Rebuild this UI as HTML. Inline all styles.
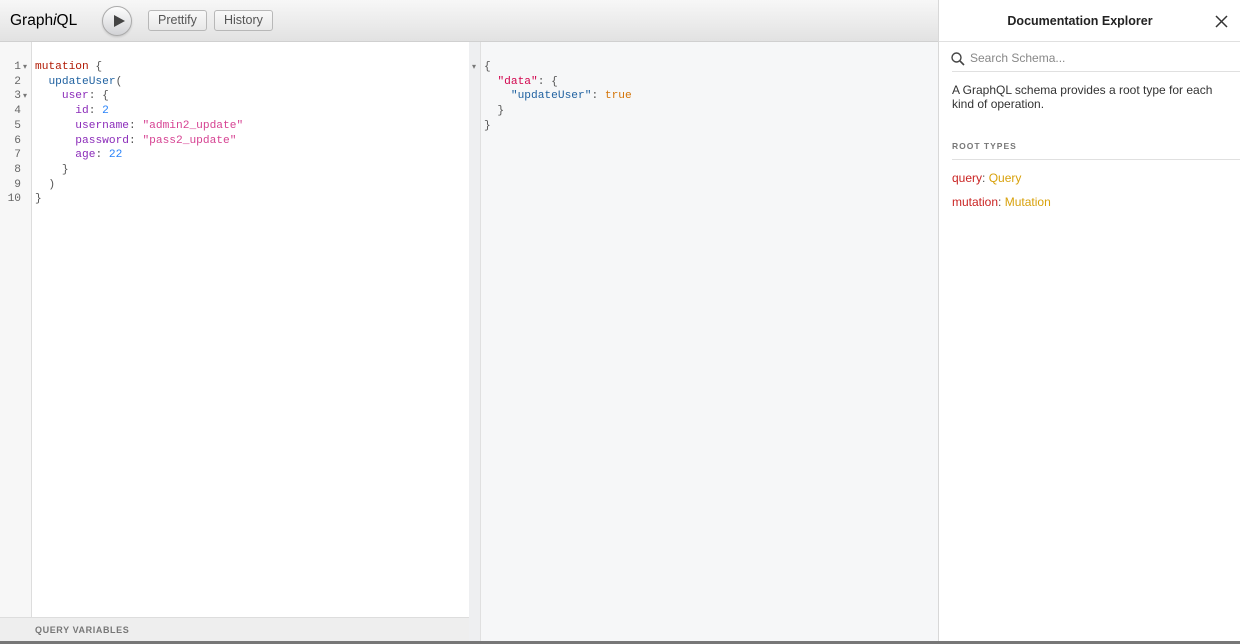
<!DOCTYPE html>
<html><head><style>
*{margin:0;padding:0;box-sizing:border-box}
body{width:1240px;height:644px;overflow:hidden;background:#fff;font-family:"Liberation Sans",sans-serif;position:relative}
.top{position:absolute;left:0;top:0;width:938px;height:42px;background:linear-gradient(#f7f7f7,#e2e2e2);border-bottom:1px solid #d0d0d0}
.logo{position:absolute;left:10px;top:12px;font-size:15.5px;color:#000}
.run{position:absolute;left:102px;top:6px;width:30px;height:30px;border-radius:50%;background:linear-gradient(#fdfdfd,#d2d3d6);border:1px solid #aaa;box-shadow:0 1px 2px rgba(0,0,0,.15)}
.run:after{content:"";position:absolute;left:11px;top:8px;border-left:11px solid #444;border-top:6.5px solid transparent;border-bottom:6.5px solid transparent}
.btn{position:absolute;top:10px;height:21px;border:1px solid #b8b8b8;border-radius:3px;background:linear-gradient(#f9f9f9,#e8e8e8);font-size:12.5px;color:#555;padding:2px 9px}
.ed{position:absolute;left:0;top:42px;width:469px;height:575px;background:#fff}
.gut{position:absolute;left:0;top:42px;width:32px;height:575px;background:#f7f7f7;border-right:1px solid #ddd}
.code{position:absolute;font-family:"Liberation Mono",monospace;font-size:11.2px;line-height:14.7px;white-space:pre;color:#555}
.ln{position:absolute;left:0;width:21px;text-align:right;font-family:"Liberation Mono",monospace;font-size:11.2px;line-height:14.7px;white-space:pre;color:#666}
.res{position:absolute;left:469px;top:42px;width:469px;height:599px;background:#f6f7f8;border-left:1px solid #e0e0e0}
.rg{position:absolute;left:469px;top:42px;width:12px;height:599px;background:#eeeff1;border-right:1px solid #e0e0e0}
.qv{position:absolute;left:0;top:617px;width:469px;height:24px;background:#eee;border-top:1px solid #ddd;font-size:9px;font-weight:bold;color:#777;letter-spacing:.6px;padding:7px 35px}
.doc{position:absolute;left:938px;top:0;width:302px;height:641px;background:#fff;border-left:1px solid #d8d8d8}
.bot{position:absolute;left:0;top:641px;width:1240px;height:3px;background:#777}
.k{color:#b11a04}.f{color:#1f61a0}.a{color:#8b2bb9}.n{color:#2882f9}.s{color:#d64292}.p{color:#555}.t{color:#d47509}.sk{color:#d2054e}.arr{color:#777;font-size:8px}
</style></head><body>
<div class="top">
<div class="logo">Graph<i>i</i>QL</div>
<div class="run"></div>
<div class="btn" style="left:148px">Prettify</div>
<div class="btn" style="left:214px">History</div>
</div>
<div class="ed"></div>
<div class="gut"></div>
<div class="ln" style="top:60px">1
2
3
4
5
6
7
8
9
10</div>
<div class="code arr" style="left:23px;top:61px;line-height:14.7px">▾

▾</div>
<div class="code" style="left:35px;top:60px"><span class="k">mutation</span> {
  <span class="f">updateUser</span>(
    <span class="a">user</span>: {
      <span class="a">id</span>: <span class="n">2</span>
      <span class="a">username</span>: <span class="s">"admin2_update"</span>
      <span class="a">password</span>: <span class="s">"pass2_update"</span>
      <span class="a">age</span>: <span class="n">22</span>
    }
  )
}</div>
<div class="res"></div>
<div class="rg"></div>
<div class="code arr" style="left:472px;top:61px">▾</div>
<div class="code" style="left:484px;top:60px">{
  <span class="sk">"data"</span>: {
    <span class="f">"updateUser"</span>: <span class="t">true</span>
  }
}</div>
<div class="qv">QUERY VARIABLES</div>
<div class="doc">
<div style="position:absolute;left:0;top:0;width:282px;height:42px;text-align:center;font-size:12.5px;font-weight:bold;color:#222;padding-top:14px">Documentation Explorer</div>
<div style="position:absolute;left:0;top:41px;width:302px;border-top:1px solid #e0e0e0"></div>
<svg style="position:absolute;left:276px;top:15px" width="13" height="13" viewBox="0 0 13 13"><path d="M1 1L12 12M12 1L1 12" stroke="#333" stroke-width="1.5"/></svg>
<svg style="position:absolute;left:12px;top:52px" width="14" height="14" viewBox="0 0 14 14"><circle cx="5.5" cy="5.5" r="4.5" fill="none" stroke="#444" stroke-width="1.4"/><path d="M9 9L13 13" stroke="#444" stroke-width="1.6"/></svg>
<div style="position:absolute;left:31px;top:51px;font-size:12px;color:#888">Search Schema...</div>
<div style="position:absolute;left:13px;top:71px;width:289px;border-top:1px solid #e0e0e0"></div>
<div style="position:absolute;left:13px;top:83px;width:285px;font-size:12px;line-height:14px;color:#333">A GraphQL schema provides a root type for each kind of operation.</div>
<div style="position:absolute;left:13px;top:141px;font-size:8.5px;font-weight:bold;letter-spacing:1px;color:#777">ROOT TYPES</div>
<div style="position:absolute;left:13px;top:159px;width:289px;border-top:1px solid #e0e0e0"></div>
<div style="position:absolute;left:13px;top:171px;font-size:12px;color:#ca2423">query<span style="color:#555">:</span> <span style="color:#d8a10b">Query</span></div>
<div style="position:absolute;left:13px;top:195px;font-size:12px;color:#ca2423">mutation<span style="color:#555">:</span> <span style="color:#d8a10b">Mutation</span></div>
</div>
<div class="bot"></div>
</body></html>
